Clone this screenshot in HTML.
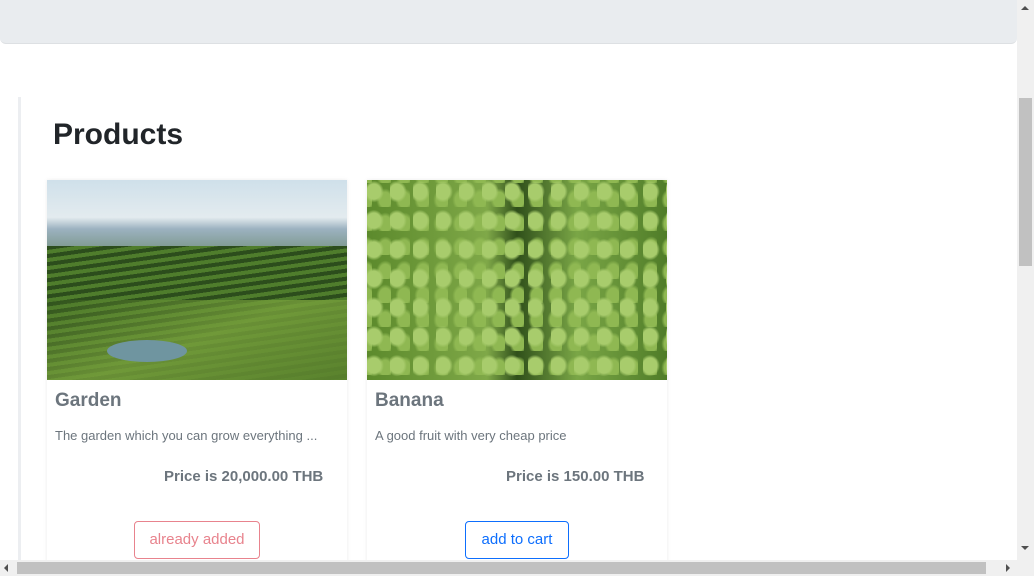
<!DOCTYPE html>
<html><head><style>
*{box-sizing:border-box;margin:0;padding:0}
body{width:1034px;height:576px;overflow:hidden;background:#fff;font-family:"Liberation Sans",sans-serif;position:relative}
.nav{position:absolute;left:0;top:0;width:1017px;height:44px;background:#e9ecef;border-radius:0 0 6px 6px;border-bottom:1px solid #dde0e3}
.wrap{position:absolute;left:18px;top:97px;width:999px;height:470px;border-left:3px solid #eceef1}
h1{position:absolute;left:53px;top:118px;font-size:30px;font-weight:bold;color:#212529}
.card{position:absolute;top:180px;width:300px;height:390px;box-shadow:0 0 4px rgba(0,0,0,.08)}
.img{height:200px}
.t{position:absolute;left:8px;top:210px;font-size:19px;font-weight:bold;color:#6c757d}
.d{position:absolute;left:8px;top:248px;font-size:13px;color:#6c757d}
.p{position:absolute;top:288px;font-size:15px;font-weight:bold;color:#6c757d}
.b{position:absolute;top:341px;height:38px;border:1px solid;border-radius:4px;font-size:15px;line-height:36px;text-align:center;background:#fff}
.vs{position:absolute;left:1017px;top:0;width:17px;height:560px;background:#f0f0f0}
.vs .th{position:absolute;left:2px;top:98px;width:13px;height:168px;background:#c1c1c1}
.hs{position:absolute;left:0;top:560px;width:1034px;height:16px;background:#f0f0f0}
.hs .th{position:absolute;left:17px;top:2px;width:969px;height:12px;background:#c1c1c1}
.ar{position:absolute;width:0;height:0;border:4px solid transparent}
.g1{position:absolute;left:0;top:0;width:300px;height:68px;background:linear-gradient(180deg,#cfe0ea,#e3ebef 55%,#9cb2c0 72%,#7f9a90 100%)}
.g2{position:absolute;left:0;top:66px;width:300px;height:134px;background:repeating-linear-gradient(172deg,#2c4d1c 0 4px,#4f7d2c 4px 8px)}
.g3{position:absolute;left:0;top:120px;width:300px;height:80px;background:linear-gradient(160deg,rgba(60,100,30,.2),rgba(120,160,60,.8) 50%,rgba(90,130,45,.9))}
.g4{position:absolute;left:60px;top:160px;width:80px;height:22px;background:#6f95a0;border-radius:50%}
</style></head><body>
<div class="nav"></div>
<div class="wrap"></div>
<h1>Products</h1>
<div class="card" style="left:47px">
 <div class="img" style="position:relative;overflow:hidden"><div class="g1"></div><div class="g2"></div><div class="g3"></div><div class="g4"></div></div>
 <div class="t">Garden</div>
 <div class="d">The garden which you can grow everything ...</div>
 <div class="p" style="left:117px">Price is 20,000.00 THB</div>
 <div class="b" style="left:87px;width:126px;color:#e8838d;border-color:#e8838d">already added</div>
</div>
<div class="card" style="left:367px">
 <div class="img" style="background:radial-gradient(ellipse at 30% 40%,#a8cc6c 0 7px,transparent 10px) 0 0/23px 29px,radial-gradient(ellipse at 70% 70%,#8fb852 0 6px,transparent 9px) 5px 3px/19px 24px,linear-gradient(90deg,#5c8a2c,#7fa848 40%,#2f4f1a 50%,#7aa646 70%,#4f7c28)"></div>
 <div class="t">Banana</div>
 <div class="d">A good fruit with very cheap price</div>
 <div class="p" style="left:139px">Price is 150.00 THB</div>
 <div class="b" style="left:98px;width:104px;color:#0d6efd;border-color:#0d6efd">add to cart</div>
</div>
<div class="vs"><div class="th"></div>
 <div class="ar" style="left:4px;top:2px;border-bottom-color:#505050"></div>
 <div class="ar" style="left:4px;top:546px;border-top-color:#505050"></div></div>
<div class="hs"><div class="th"></div>
 <div class="ar" style="left:0;top:4px;border-right-color:#505050"></div>
 <div class="ar" style="left:1006px;top:4px;border-left-color:#505050"></div></div>
</body></html>
